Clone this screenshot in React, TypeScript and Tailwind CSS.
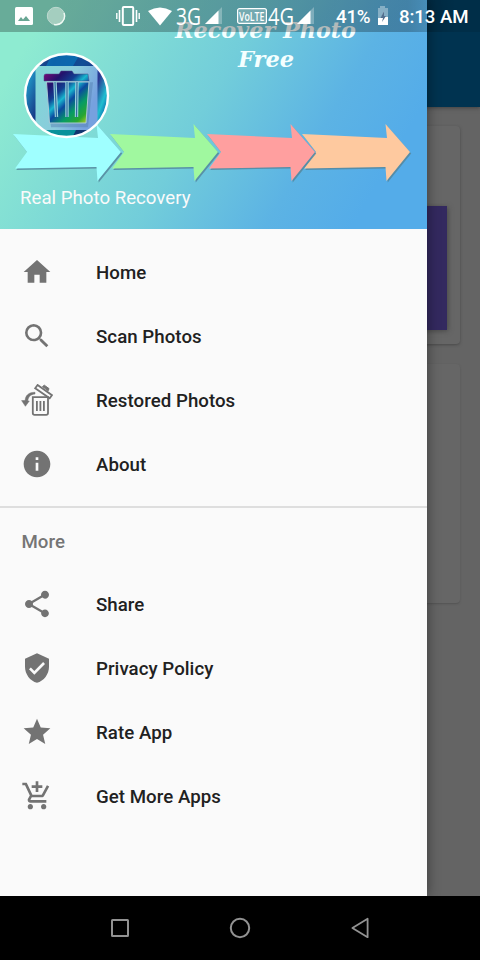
import type { ReactNode } from "react";
import {
  MdHome,
  MdSearch,
  MdInfo,
  MdShare,
  MdVerifiedUser,
  MdGrade,
  MdAddShoppingCart,
} from "react-icons/md";

function RestoreIcon() {
  return (
    <svg width="32" height="32" viewBox="0 0 32 32" fill="none" stroke="#737373">
      <path d="M11.8 13.2H27V29Q27 30.9 25.2 30.9H13.6Q11.8 30.9 11.8 29Z" strokeWidth="1.8" />
      <path d="M15.9 17V27M19.4 17V27M22.9 17V27" strokeWidth="1.8" />
      <path d="M16.6 1L31 11.2L28.7 14.2L14.2 4.2Z" strokeWidth="1.8" />
      <path d="M21.5 2.6L23.3 1.2L28 4.6L27.2 6.8Z" fill="#737373" strokeWidth="1" />
      <path d="M14 8.3C8 8.2 4.4 11.3 4.1 16.5L0.6 16.6L4.4 22.3L8.3 17H6.8C7.2 13 9.5 10.3 14 10Z" fill="#737373" strokeWidth="0.5" />
    </svg>
  );
}

function MenuItem({ icon, label }: { icon: ReactNode; label: string }) {
  return (
    <div className="flex h-16 items-center pl-[21px]">
      <span className="flex w-[75px] text-[32px] text-[#737373]">{icon}</span>
      <span className="pt-px text-[18.67px] font-medium tracking-[0.05px] text-[#212121]">{label}</span>
    </div>
  );
}

function Arrow({ x, color }: { x: number; color: string }) {
  const d = "M0 0L85 4L83.5 -10L108 18L84.5 47L83.5 33L2 34.5L14 18Z";
  return (
    <g transform={`translate(${x} 134)`}>
      <path d={d} fill="#55879d" transform="translate(1.2 1.4)" opacity="0.85" />
      <path d={d} fill={color} />
    </g>
  );
}

function Header() {
  return (
    <svg className="block h-[229px] w-[427px]" viewBox="0 0 427 229">
      <defs>
        <linearGradient id="sky" gradientUnits="userSpaceOnUse" x1="20" y1="55" x2="342" y2="244">
          <stop offset="0" stopColor="#8eebd1" />
          <stop offset="0.5" stopColor="#72cdda" />
          <stop offset="0.8" stopColor="#5cb3e4" />
          <stop offset="1" stopColor="#54ace9" />
        </linearGradient>
        <linearGradient id="ring" gradientUnits="userSpaceOnUse" x1="25" y1="80" x2="108" y2="110">
          <stop offset="0" stopColor="#21a2d0" />
          <stop offset="0.24" stopColor="#173b88" />
          <stop offset="0.55" stopColor="#087ac2" />
          <stop offset="0.78" stopColor="#2b3690" />
          <stop offset="0.91" stopColor="#20bfd0" />
          <stop offset="1" stopColor="#075aa6" />
        </linearGradient>
        <linearGradient id="can" gradientUnits="userSpaceOnUse" x1="45" y1="72" x2="91" y2="120">
          <stop offset="0" stopColor="#7c0879" />
          <stop offset="0.2" stopColor="#22136d" />
          <stop offset="0.36" stopColor="#123f91" />
          <stop offset="0.47" stopColor="#18b6ce" />
          <stop offset="0.57" stopColor="#0c499f" />
          <stop offset="0.72" stopColor="#079b65" />
          <stop offset="0.87" stopColor="#29a631" />
          <stop offset="1" stopColor="#c2ce21" />
        </linearGradient>
        <linearGradient id="panel" x1="0" y1="0" x2="1" y2="0.4">
          <stop offset="0" stopColor="#7fd8d6" />
          <stop offset="0.6" stopColor="#8bcbdc" />
          <stop offset="1" stopColor="#76a1df" />
        </linearGradient>
        <clipPath id="logo"><circle cx="66.5" cy="95.5" r="41" /></clipPath>
      </defs>
      <rect width="427" height="229" fill="url(#sky)" />
      <g fill="#f4ffff" fontFamily="'DejaVu Serif', serif" fontSize="22" fontWeight="700" fontStyle="italic">
        <text x="175" y="38" textLength="181" lengthAdjust="spacingAndGlyphs">Recover Photo</text>
        <text x="238" y="67" textLength="56" lengthAdjust="spacingAndGlyphs">Free</text>
      </g>
      <Arrow x={302} color="#fec99f" />
      <Arrow x={207} color="#ff9f9f" />
      <Arrow x={110} color="#a0f89f" />
      <Arrow x={13} color="#9fffff" />
      <circle cx="66.5" cy="95.5" r="41.2" fill="url(#ring)" />
      <g clipPath="url(#logo)">
        <path d="M24 54H109V66H24Z" fill="#153b83" opacity="0.7" />
        <path d="M52 54H80L73 66H46Z" fill="#087bc0" opacity="0.65" />
        <path d="M24 130H109V138H24Z" fill="#123670" />
        <path d="M46 130H76L72 138H43Z" fill="#08919b" />
        <rect x="35.5" y="66" width="62" height="64" fill="url(#panel)" />
        <path d="M45 81H92L87 126H50Z" fill="#527daf" opacity="0.45" transform="translate(1 1.3)" />
        <path d="M44 76Q44 74 46 74H59L61 71H72L74 74H88L89 81H44Z" fill="url(#can)" stroke="#4d4882" strokeWidth="0.5" />
        <path d="M46.5 82H89L86 123H49.5Z" fill="url(#can)" stroke="#a8cad5" strokeWidth="1" />
        <path d="M55 82L56.5 117M67 82V117M77 82L76.5 117" fill="none" stroke="#9bd2de" strokeWidth="3.4" />
        <path d="M55 82L56.5 117M67 82V117M77 82L76.5 117" fill="none" stroke="#2f6c9e" strokeWidth="1.2" />
      </g>
      <circle cx="66.5" cy="95.5" r="41.5" fill="none" stroke="#fff" strokeWidth="2.4" />
      <text x="20" y="204" fill="#fafafa" fontFamily="Roboto, sans-serif" fontSize="18.67" textLength="170.5">Real Photo Recovery</text>
    </svg>
  );
}

function Signal() {
  return (
    <svg width="19" height="19" viewBox="0 0 19 19">
      <path d="M17 0V17H0Z" fill="#fff" opacity="0.28" />
      <path d="M13.5 3.5V17H0Z" fill="#fff" />
    </svg>
  );
}

function StatusBar() {
  return (
    <div className="absolute inset-x-0 top-0 flex h-8 items-center bg-gradient-to-r from-black/27 from-85% to-black/10 to-95% font-[Roboto,sans-serif] text-white">
      <svg className="ml-[15px]" width="18" height="18" viewBox="0 0 18 18">
        <rect width="18" height="18" rx="1.5" fill="#fff" />
        <path d="M3 14L6 10L8 12.5L11 9L15 14Z" fill="#68a693" />
      </svg>
      <svg className="ml-[13px]" width="20" height="20" viewBox="0 0 20 20">
        <circle cx="10" cy="10" r="8.7" fill="#a4cebf" stroke="#bed9d0" />
        <path d="M18 7A8.7 8.7 0 0 1 8 18.5" fill="none" stroke="#f1faf5" strokeWidth="1.4" />
      </svg>
      <svg className="ml-[50px]" width="24" height="22" viewBox="0 0 24 22" fill="none" stroke="#fff">
        <rect x="6.8" y="2" width="10.4" height="18" rx="1" strokeWidth="2" />
        <path d="M3.5 5V17M20.5 5V17" strokeWidth="1.6" />
        <path d="M0.8 8V14M23.2 8V14" strokeWidth="1.4" />
      </svg>
      <svg className="ml-2" width="24" height="19" viewBox="0 0 24 19">
        <path d="M0 4Q12 -3 24 4L12 18.5Z" fill="#fff" />
      </svg>
      <svg className="ml-1 overflow-visible" width="25" height="24" viewBox="0 0 25 24">
        <text x="0" y="20.5" fill="#fff" fontFamily="'Open Sans', sans-serif" fontSize="23.5" textLength="25" lengthAdjust="spacingAndGlyphs">3G</text>
      </svg>
      <span className="ml-1"><Signal /></span>
      <svg className="ml-[13px] overflow-visible" width="30" height="18" viewBox="0 0 30 18">
        <rect x="0.6" y="1.6" width="28.8" height="14.8" rx="2" fill="#ffffff30" stroke="#fff" strokeWidth="1.2" />
        <text x="2" y="14" fill="#fff" fontFamily="'Open Sans', sans-serif" fontSize="12" fontWeight="600" textLength="25.5" lengthAdjust="spacingAndGlyphs">VoLTE</text>
      </svg>
      <svg className="ml-px overflow-visible" width="26" height="24" viewBox="0 0 26 24">
        <text x="0" y="20.5" fill="#fff" fontFamily="'Open Sans', sans-serif" fontSize="23.5" textLength="26" lengthAdjust="spacingAndGlyphs">4G</text>
      </svg>
      <span className="ml-[3px]"><Signal /></span>
      <svg className="ml-5 overflow-visible" width="36" height="24" viewBox="0 0 36 24">
        <text x="0" y="19" fill="#fff" fontFamily="Roboto, sans-serif" fontSize="18.67" fontWeight="500" textLength="34.5">41%</text>
      </svg>
      <svg className="ml-[5px]" width="12" height="20" viewBox="0 0 12 20">
        <path d="M3 0H8V2H11V19H1V2H3Z" fill="#fff" opacity="0.35" />
        <path d="M1 12H4L7 5V11H11V19H1Z" fill="#fff" />
        <path d="M7 5L3.5 12H6L5 16L9 10H7Z" fill="#526f8e" />
      </svg>
      <svg className="ml-2.5 overflow-visible" width="71" height="24" viewBox="0 0 71 24">
        <text x="0" y="19" fill="#fff" fontFamily="Roboto, sans-serif" fontSize="18.67" fontWeight="500" textLength="69.5">8:13 AM</text>
      </svg>
    </div>
  );
}

export default function App() {
  return (
    <div className="relative flex h-[960px] w-[480px] flex-col overflow-hidden bg-[#646464] font-[Roboto,sans-serif]">
      <div className="h-[107px] shrink-0 bg-[#003350] shadow-[0_1px_4px_#404040]" />
      <div className="flex flex-1 flex-col gap-5 px-5 pt-[19px]">
        <div className="flex h-[218px] items-end justify-end rounded bg-[#666] pr-[13px] pb-[14px] shadow-[0_1px_3px_#494949]">
          <div className="h-[124px] w-[300px] bg-[#33295f] shadow-[1px_1px_5px_#484848]" />
        </div>
        <div className="h-[239px] rounded bg-[#666] shadow-[0_1px_2px_#535353]" />
      </div>
      <nav className="flex h-16 shrink-0 items-center bg-black">
        <svg className="ml-[108px]" width="24" height="24" viewBox="0 0 24 24" fill="none" stroke="#929292" strokeWidth="2">
          <rect x="4" y="4" width="16" height="16" rx="0.5" />
        </svg>
        <svg className="ml-24" width="24" height="24" viewBox="0 0 24 24" fill="none" stroke="#929292" strokeWidth="2">
          <circle cx="12" cy="12" r="9.2" />
        </svg>
        <svg className="ml-[98px]" width="24" height="24" viewBox="0 0 24 24" fill="none" stroke="#929292" strokeWidth="1.8" strokeLinejoin="round">
          <path d="M17.6 2.8V21.2L2.4 12Z" />
        </svg>
      </nav>
      <aside className="absolute top-0 left-0 h-[896px] w-[427px] bg-[#fafafa] [clip-path:inset(0_-30px_0_0)] shadow-[0_0_12px_#00000070]">
        <Header />
        <div className="pt-[11px]">
          <MenuItem icon={<MdHome />} label="Home" />
          <MenuItem icon={<MdSearch />} label="Scan Photos" />
          <MenuItem icon={<RestoreIcon />} label="Restored Photos" />
          <MenuItem icon={<MdInfo />} label="About" />
        </div>
        <div className="mt-2.5 h-[2px] bg-[#dedede]" />
        <div className="flex h-16 items-center pt-[3px] pl-[21.5px] text-[18.67px] font-medium tracking-[0.05px] text-[#757575]">More</div>
        <MenuItem icon={<MdShare />} label="Share" />
        <MenuItem icon={<MdVerifiedUser />} label="Privacy Policy" />
        <MenuItem icon={<MdGrade />} label="Rate App" />
        <MenuItem icon={<MdAddShoppingCart />} label="Get More Apps" />
      </aside>
      <StatusBar />
    </div>
  );
}
